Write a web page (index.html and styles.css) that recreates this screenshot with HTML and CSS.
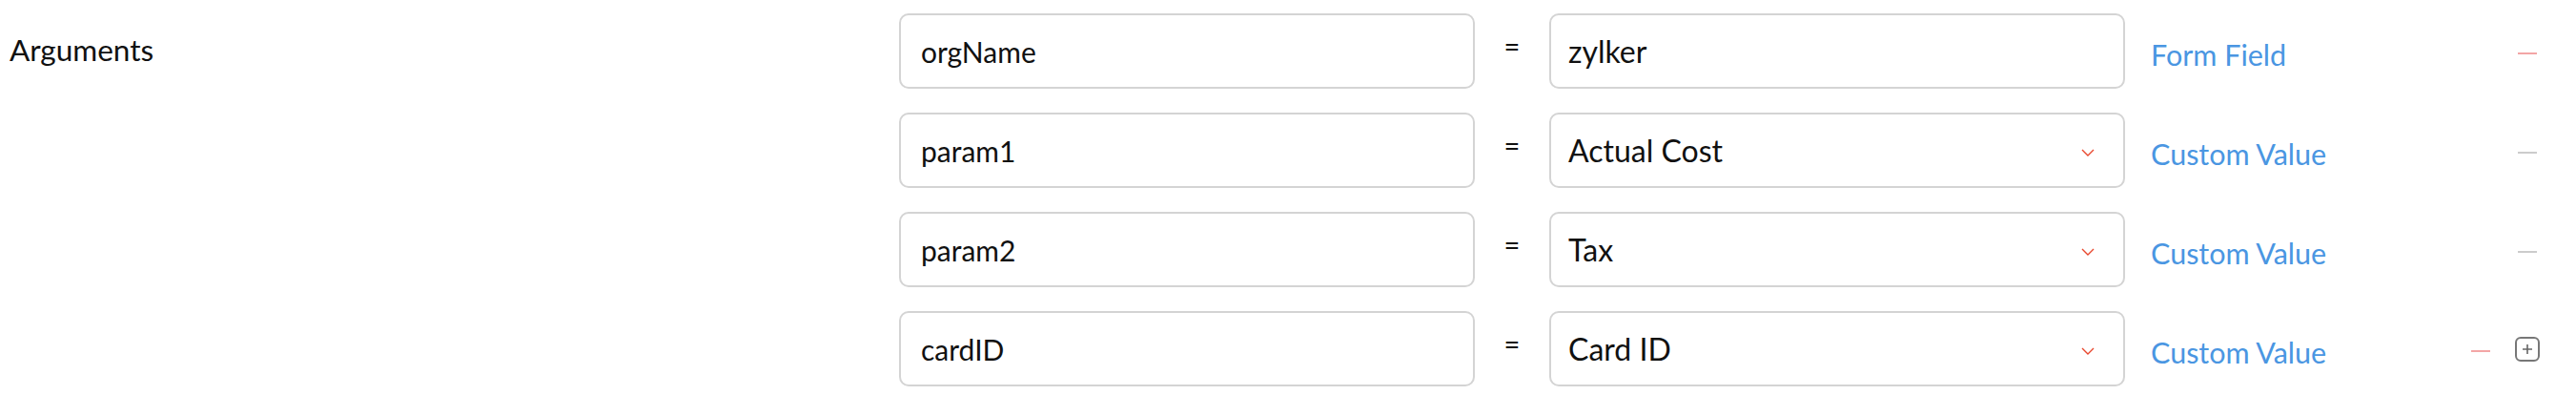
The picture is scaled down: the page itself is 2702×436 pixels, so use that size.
FILE: index.html
```html
<!DOCTYPE html>
<html lang="en">
<head>
<meta charset="utf-8">
<title>Arguments</title>
<link rel="stylesheet" href="styles.css">
</head>
<body>
<div class="args">
  <div class="label">Arguments</div>
  <div class="rows">
    <div class="row">
      <div class="field name"><span class="val">orgName</span></div>
      <div class="eq">=</div>
      <div class="field value"><span class="val">zylker</span></div>
      <a class="mode">Form Field</a>
      <div class="actions"><span class="minus red"></span></div>
    </div>
    <div class="row">
      <div class="field name"><span class="val">param1</span></div>
      <div class="eq">=</div>
      <div class="field value"><span class="val">Actual Cost</span><svg class="chev" width="14" height="8" viewBox="0 0 14 8"><path d="M1 1 L7 7 L13 1" fill="none" stroke="#e8482e" stroke-width="1.4"/></svg></div>
      <a class="mode">Custom Value</a>
      <div class="actions"><span class="minus gray"></span></div>
    </div>
    <div class="row">
      <div class="field name"><span class="val">param2</span></div>
      <div class="eq">=</div>
      <div class="field value"><span class="val">Tax</span><svg class="chev" width="14" height="8" viewBox="0 0 14 8"><path d="M1 1 L7 7 L13 1" fill="none" stroke="#e8482e" stroke-width="1.4"/></svg></div>
      <a class="mode">Custom Value</a>
      <div class="actions"><span class="minus gray"></span></div>
    </div>
    <div class="row">
      <div class="field name"><span class="val">cardID</span></div>
      <div class="eq">=</div>
      <div class="field value"><span class="val">Card ID</span><svg class="chev" width="14" height="8" viewBox="0 0 14 8"><path d="M1 1 L7 7 L13 1" fill="none" stroke="#e8482e" stroke-width="1.4"/></svg></div>
      <a class="mode">Custom Value</a>
      <div class="actions"><span class="minus red"></span><svg class="plus" width="26" height="26" viewBox="0 0 26 26"><rect x="1" y="1" width="24" height="24" rx="5" fill="none" stroke="#777" stroke-width="2"/><path d="M13 8 V18 M8 13 H18" stroke="#666" stroke-width="1.6"/></svg></div>
    </div>
  </div>
</div>
</body>
</html>
```
FILE: styles.css
```css
html, body {
  margin: 0;
  padding: 0;
  background: #ffffff;
}
body {
  font-family: Lato, "Open Sans", sans-serif;
  color: #111111;
}
.args {
  display: flex;
  padding: 14px 38px 0 10px;
}
.label {
  width: 933px;
  flex: none;
  font-size: 31.5px;
  padding-top: 19px;
  color: #111;
}
.rows {
  flex: 1;
  display: flex;
  flex-direction: column;
  gap: 25px;
}
.row {
  display: grid;
  grid-template-columns: 604px 78px 604px 1fr auto;
  align-items: center;
}
.field {
  box-sizing: border-box;
  height: 79px;
  border: 2px solid #d4d4d4;
  border-radius: 10px;
  display: flex;
  align-items: center;
  justify-content: space-between;
  padding: 0 30px 0 21px;
  color: #111;
}
.field.name {
  font-size: 30px;
}
.field.value {
  font-size: 32px;
  padding-left: 18px;
}
.eq {
  align-self: start;
  padding-top: 16px;
  text-align: center;
  font-size: 29px;
  color: #111;
}
.chev {
  display: block;
  margin-top: 4px;
}
.mode {
  padding-left: 27px;
  padding-top: 6px;
  font-size: 30.5px;
  color: #4a96e2;
  cursor: pointer;
}
.actions {
  display: flex;
  align-items: center;
  justify-content: flex-end;
  gap: 23px;
  height: 26px;
}
.minus {
  display: flex;
  align-items: center;
  justify-content: center;
  width: 26px;
  height: 26px;
  margin-top: 4px;
}
.minus::before {
  content: "";
  display: block;
  width: 20px;
  height: 2px;
}
.minus.red::before {
  background: #f3a6a6;
}
.minus.gray::before {
  background: #cccccc;
}
.plus {
  display: block;
}
```
